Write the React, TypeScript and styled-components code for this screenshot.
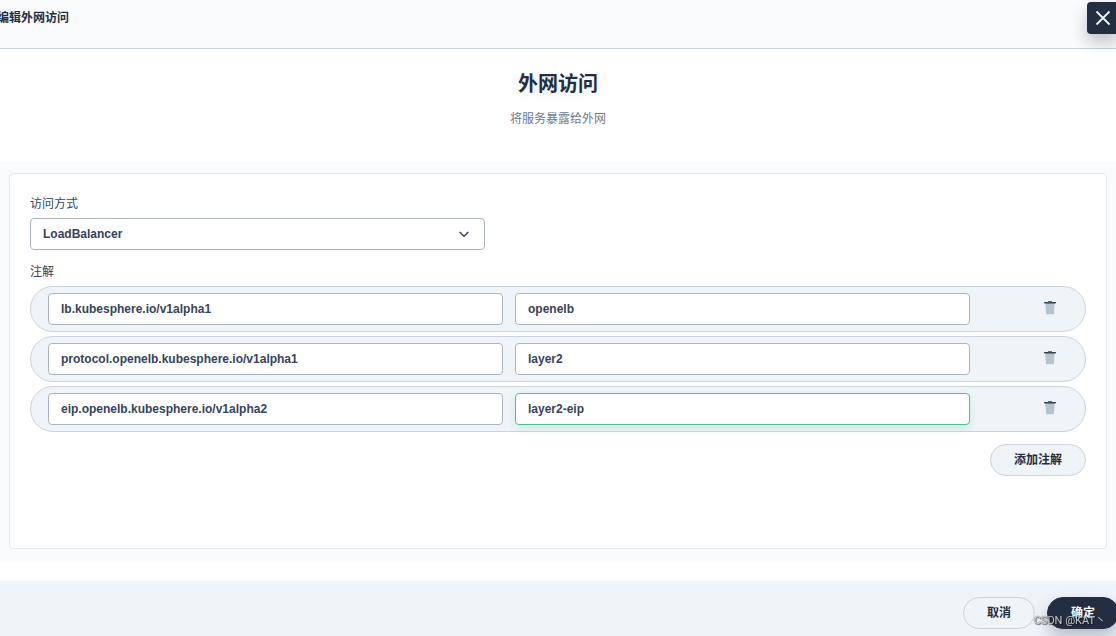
import React, { useState } from 'react';
import styled, { createGlobalStyle } from 'styled-components';

const GlobalStyle = createGlobalStyle`
  *, *::before, *::after { box-sizing: border-box; }
  html, body, #root { height: 100%; }
  body {
    margin: 0;
    overflow: hidden;
    background: #fff;
    color: #36435c;
    font-family: "Liberation Sans", "Noto Sans CJK SC", sans-serif;
    font-size: 12px;
    line-height: 20px;
  }
  button, input, select { font: inherit; color: inherit; }
`;

const Modal = styled.div`
  display: flex;
  flex-direction: column;
  min-height: 100%;
  margin: 0 -3px;
`;

const Header = styled.header`
  display: flex;
  align-items: flex-start;
  justify-content: space-between;
  height: 49px;
  padding-top: 2px;
  background: #f9fbfd;
  border-bottom: 1px solid #ccd3db;
`;

const HeaderTitle = styled.h1`
  margin: 0;
  padding-top: 6px;
  color: #242e42;
  font-size: 12px;
  font-weight: 600;
`;

const CloseButton = styled.button`
  display: grid;
  place-items: center;
  width: 32px;
  height: 32px;
  padding: 0;
  border: 0;
  border-radius: 4px;
  background: #242e42;
  color: #eff4f9;
  box-shadow: 0 8px 16px rgba(36, 46, 66, 0.28);
`;

const Intro = styled.section`
  height: 112px;
  padding-top: 19px;
  text-align: center;
`;

const IntroTitle = styled.h2`
  margin: 0;
  color: #242e42;
  font-size: 20px;
  font-weight: 600;
  line-height: 32px;
  text-shadow: 0 4px 8px rgba(36, 46, 66, 0.1);
`;

const IntroText = styled.p`
  margin: 0;
  padding-top: 9px;
  color: #6b7a92;
`;

const Content = styled.main`
  padding: 12px;
  background: #f9fbfd;
`;

const Panel = styled.form`
  min-height: 376px;
  padding: 20px;
  border: 1px solid #e3e9ef;
  border-radius: 4px;
  background: #fff;
`;

const Label = styled.label`
  display: block;
  margin-bottom: 4px;
`;

const Fieldset = styled.fieldset`
  min-width: 0;
  margin: 12px 0 0;
  padding: 0;
  border: 0;
`;

const Legend = styled.legend`
  padding: 0 0 4px;
`;

const SelectBox = styled.div`
  position: relative;
  width: calc(50% - 73px);
`;

const Select = styled.select`
  display: block;
  width: 100%;
  height: 32px;
  padding: 0 12px;
  border: 1px solid #abb4be;
  border-radius: 4px;
  appearance: none;
  background: #fff;
  font-weight: 600;
`;

const Chevron = styled.svg`
  position: absolute;
  top: 8px;
  right: 13px;
  pointer-events: none;
`;

const Rows = styled.div`
  display: grid;
  gap: 4px;
`;

const Row = styled.div`
  display: grid;
  grid-template-columns: 1fr 1fr 86px;
  gap: 12px;
  padding: 6px 17px;
  border: 1px solid #ccd3db;
  border-radius: 23px;
  background: #eff4f9;
`;

const TextInput = styled.input<{ $active?: boolean }>`
  min-width: 0;
  height: 32px;
  padding: 0 12px;
  border: 1px solid ${(p) => (p.$active ? '#55bc8a' : '#abb4be')};
  border-radius: 4px;
  outline: 0;
  background: #fff;
  box-shadow: ${(p) => (p.$active ? '0 4px 8px rgba(85, 188, 138, 0.2)' : 'none')};
  font-weight: 600;
`;

const DeleteButton = styled.button`
  display: grid;
  justify-self: end;
  place-items: center;
  width: 36px;
  height: 32px;
  padding: 0 0 2px;
  border: 0;
  background: transparent;
`;

const Actions = styled.div`
  display: flex;
  justify-content: flex-end;
  padding-top: 12px;
`;

const Button = styled.button<{ $kind?: 'plain' | 'primary' }>`
  height: 32px;
  padding: 0 23px;
  border: 1px solid ${(p) => (p.$kind === 'primary' ? '#242e42' : '#ccd3db')};
  border-radius: 16px;
  background: ${(p) => (p.$kind === 'primary' ? '#242e42' : '#eff4f9')};
  color: ${(p) => (p.$kind === 'primary' ? '#fff' : '#242e42')};
  box-shadow: ${(p) => (p.$kind === 'primary' ? '0 8px 16px rgba(36, 46, 66, 0.28)' : 'none')};
  font-weight: 600;
`;

const Footer = styled.footer`
  display: flex;
  flex: 1;
  align-items: flex-start;
  justify-content: flex-end;
  gap: 12px;
  margin-top: 20px;
  padding-top: 16px;
  background: #eff4f9;
`;

const Watermark = styled.span`
  position: fixed;
  right: 10px;
  bottom: 5px;
  color: rgba(255, 255, 255, 0.7);
  font-family: Roboto, "Noto Sans CJK SC", sans-serif;
  font-size: 11px;
  text-shadow: 0 0 1px #333, 1px 1px 1px rgba(0, 0, 0, 0.6);
  line-height: 20px;
  white-space: nowrap;
  pointer-events: none;
`;

const TrashIcon = () => (
  <svg width="16" height="16" viewBox="0 0 16 16" aria-hidden="true">
    <path d="M3.3 3h9.4l-.8 11.2H4.1z" fill="#b6c2cd" />
    <path d="M3.2 3h9.6v1H3.2z" fill="#8595a6" />
    <path d="M6 1.2h4V2h4v1.2H2V2h4z" fill="#324558" />
  </svg>
);

const initialRows = [
  { key: 'lb.kubesphere.io/v1alpha1', value: 'openelb' },
  { key: 'protocol.openelb.kubesphere.io/v1alpha1', value: 'layer2' },
  { key: 'eip.openelb.kubesphere.io/v1alpha2', value: 'layer2-eip' },
];

export default function App() {
  const [rows, setRows] = useState(initialRows);
  const update = (index: number, part: Partial<{ key: string; value: string }>) =>
    setRows(rows.map((row, i) => (i === index ? { ...row, ...part } : row)));

  return (
    <>
      <GlobalStyle />
      <Modal>
        <Header>
          <HeaderTitle>编辑外网访问</HeaderTitle>
          <CloseButton type="button" aria-label="关闭">
            <svg width="16" height="16" viewBox="0 0 16 16" aria-hidden="true">
              <path d="M1.5 1.5l13 13M14.5 1.5l-13 13" stroke="currentColor" strokeWidth="1.8" />
            </svg>
          </CloseButton>
        </Header>
        <Intro>
          <IntroTitle>外网访问</IntroTitle>
          <IntroText>将服务暴露给外网</IntroText>
        </Intro>
        <Content>
          <Panel id="access" onSubmit={(e) => e.preventDefault()}>
            <Label htmlFor="mode">访问方式</Label>
            <SelectBox>
              <Select id="mode" defaultValue="LoadBalancer">
                <option>LoadBalancer</option>
              </Select>
              <Chevron width="16" height="16" viewBox="0 0 16 16" aria-hidden="true">
                <path d="M3.6 6L8 10.2 12.4 6" fill="none" stroke="#324558" strokeWidth="1.5" />
              </Chevron>
            </SelectBox>
            <Fieldset>
              <Legend>注解</Legend>
              <Rows>
                {rows.map((row, i) => (
                  <Row key={i}>
                    <TextInput
                      aria-label="键"
                      value={row.key}
                      onChange={(e) => update(i, { key: e.target.value })}
                    />
                    <TextInput
                      aria-label="值"
                      $active={i === 2}
                      value={row.value}
                      onChange={(e) => update(i, { value: e.target.value })}
                    />
                    <DeleteButton
                      type="button"
                      aria-label="删除"
                      onClick={() => setRows(rows.filter((_, j) => j !== i))}
                    >
                      <TrashIcon />
                    </DeleteButton>
                  </Row>
                ))}
              </Rows>
              <Actions>
                <Button type="button" onClick={() => setRows([...rows, { key: '', value: '' }])}>
                  添加注解
                </Button>
              </Actions>
            </Fieldset>
          </Panel>
        </Content>
        <Footer>
          <Button type="button">取消</Button>
          <Button type="submit" form="access" $kind="primary">
            确定
          </Button>
        </Footer>
      </Modal>
      <Watermark>CSDN @KAT丶</Watermark>
    </>
  );
}
